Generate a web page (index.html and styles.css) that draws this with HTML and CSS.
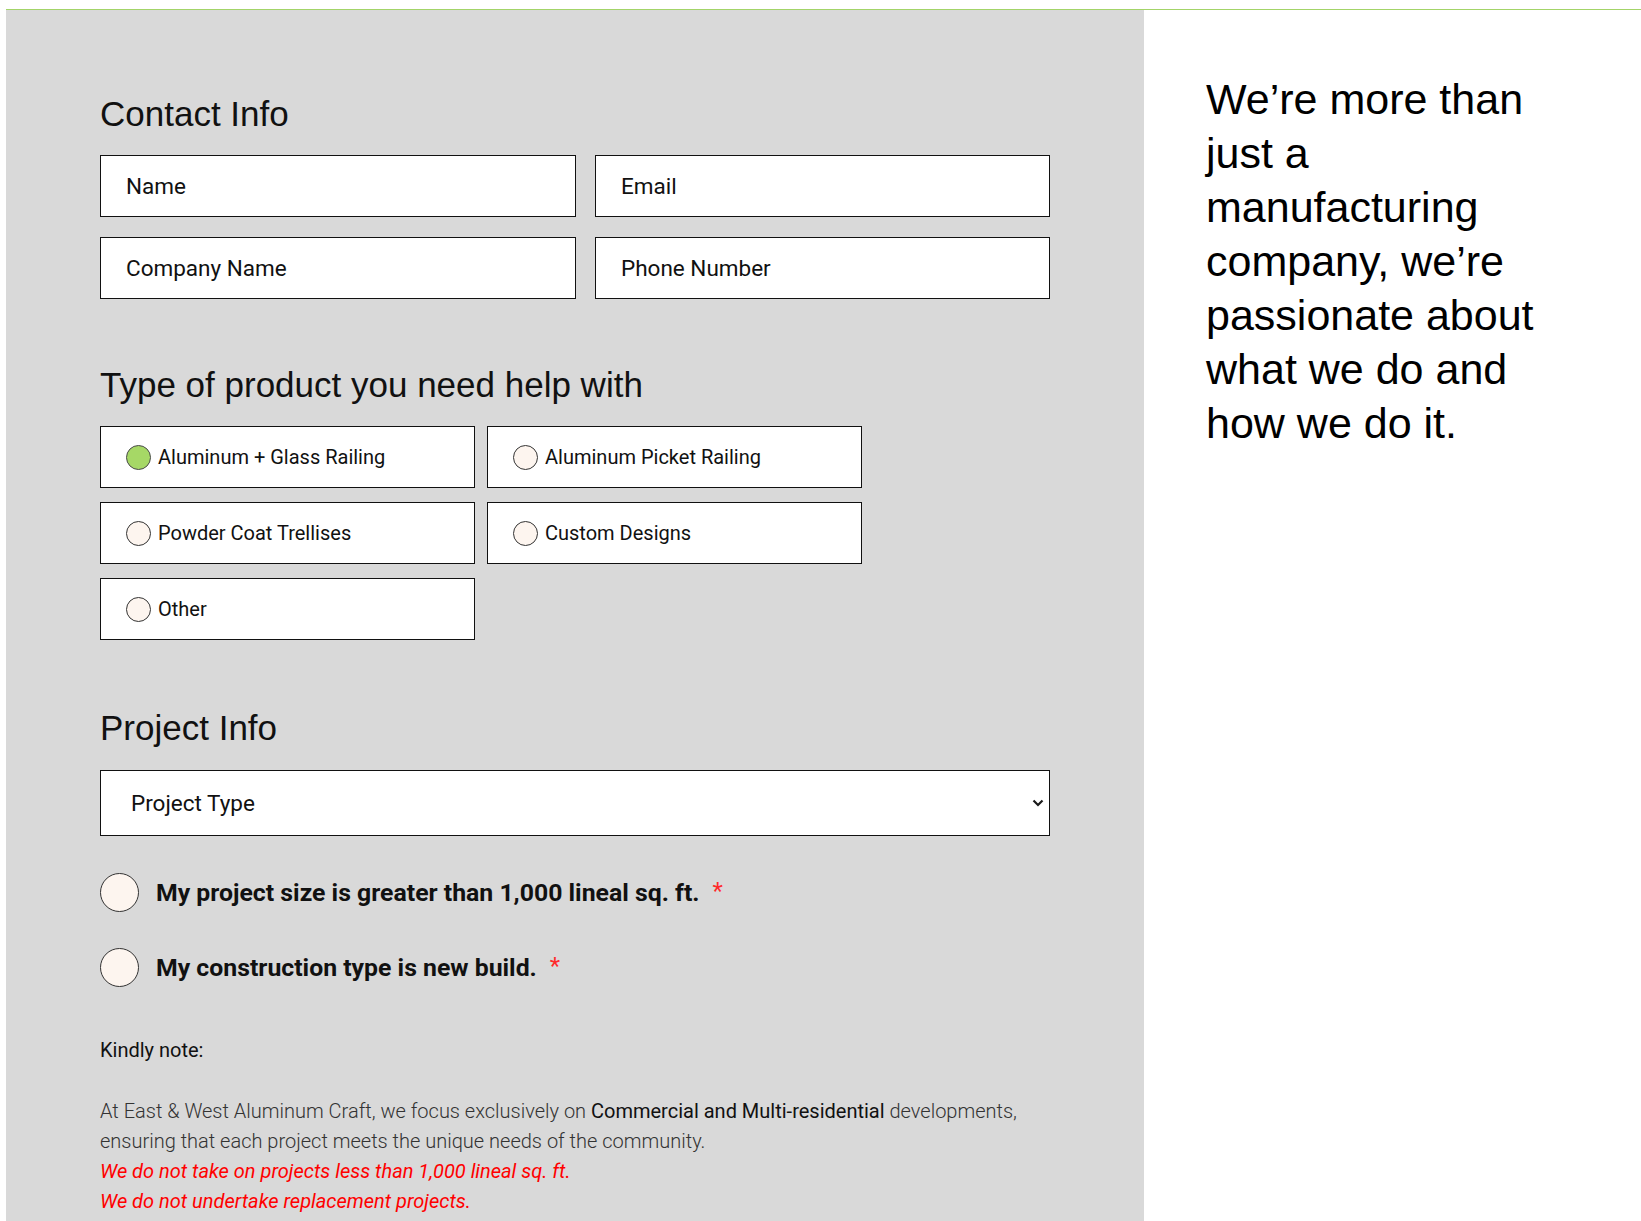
FILE: index.html
```html
<!DOCTYPE html>
<html lang="en">
<head>
<meta charset="utf-8">
<title>Contact</title>
<link rel="stylesheet" href="styles.css">
</head>
<body>
<div class="page">
  <form class="form-panel">
    <h2 class="section-title">Contact Info</h2>
    <div class="contact-grid">
      <input class="text-field" type="text" placeholder="Name">
      <input class="text-field" type="email" placeholder="Email">
      <input class="text-field" type="text" placeholder="Company Name">
      <input class="text-field" type="tel" placeholder="Phone Number">
    </div>

    <h2 class="section-title section-gap">Type of product you need help with</h2>
    <div class="option-grid">
      <label class="option"><span class="dot dot-checked"></span><span>Aluminum + Glass Railing</span></label>
      <label class="option"><span class="dot"></span><span>Aluminum Picket Railing</span></label>
      <label class="option"><span class="dot"></span><span>Powder Coat Trellises</span></label>
      <label class="option"><span class="dot"></span><span>Custom Designs</span></label>
      <label class="option"><span class="dot"></span><span>Other</span></label>
    </div>

    <h2 class="section-title section-gap-lg">Project Info</h2>
    <div class="select-wrap">
      <select class="select-field">
        <option>Project Type</option>
      </select>
      <svg class="select-arrow" width="12" height="8" viewBox="0 0 12 8" aria-hidden="true"><path d="M1.5 1.5 L6 6 L10.5 1.5" fill="none" stroke="#1a1a1a" stroke-width="2.2"/></svg>
    </div>

    <div class="confirm-list">
      <label class="confirm"><span class="big-dot"></span><span class="confirm-text">My project size is greater than 1,000 lineal sq. ft.</span><span class="req">*</span></label>
      <label class="confirm"><span class="big-dot"></span><span class="confirm-text">My construction type is new build.</span><span class="req">*</span></label>
    </div>

    <div class="note">
      <p class="note-title">Kindly note:</p>
      <p class="note-body">At East &amp; West Aluminum Craft, we focus exclusively on <strong>Commercial and Multi-residential</strong> developments, ensuring that each project meets the unique needs of the community.</p>
      <p class="warn">We do not take on projects less than 1,000 lineal sq. ft.</p>
      <p class="warn">We do not undertake replacement projects.</p>
    </div>
  </form>

  <aside class="side-panel">
    <p class="tagline">We’re more than just a manufacturing company, we’re passionate about what we do and how we do it.</p>
  </aside>
</div>
</body>
</html>
```

FILE: styles.css
```css
html, body {
  margin: 0;
  padding: 0;
  background: #ffffff;
}

body {
  font-family: "Liberation Sans", Arial, sans-serif;
  color: #111;
}

.page {
  margin: 9px 0 0 6px;
  border-top: 1px solid #a3d468;
  display: grid;
  grid-template-columns: 1138px 1fr;
  min-height: calc(100vh - 10px);
}

.form-panel {
  background: #d9d9d9;
  padding: 83px 94px 10px 94px;
}

.section-title {
  margin: 0 0 21px;
  font-family: "Liberation Sans", Arial, sans-serif;
  font-weight: 400;
  font-size: 35px;
  line-height: 42px;
  color: #111;
}

.section-gap {
  margin-top: 65px;
}

.section-gap-lg {
  margin-top: 67px;
}

.contact-grid {
  display: grid;
  grid-template-columns: 476px 455px;
  column-gap: 19px;
  row-gap: 20px;
  margin-top: -1px;
}

.text-field {
  box-sizing: border-box;
  height: 62px;
  width: 100%;
  margin: 0;
  padding: 0 25px;
  border: 1px solid #111;
  border-radius: 0;
  background: #fff;
  font-family: Roboto, "Liberation Sans", sans-serif;
  font-size: 22.5px;
  color: #111;
  outline: none;
}

.text-field::placeholder {
  color: #111;
  opacity: 1;
}

.option-grid {
  display: grid;
  grid-template-columns: 375px 375px;
  column-gap: 12px;
  row-gap: 14px;
  margin-top: -1px;
}

.option {
  box-sizing: border-box;
  height: 62px;
  display: flex;
  align-items: center;
  gap: 7px;
  padding-left: 25px;
  border: 1px solid #111;
  background: #fff;
  font-family: Roboto, "Liberation Sans", sans-serif;
  font-size: 20px;
  color: #111;
}

.dot {
  box-sizing: border-box;
  width: 25px;
  height: 25px;
  border-radius: 50%;
  border: 1px solid #333;
  background: #fdf5ef;
  flex: none;
}

.dot-checked {
  background: #a6d866;
  border-color: #4a4a4a;
}

.select-wrap {
  position: relative;
}

.select-field {
  -webkit-appearance: none;
  appearance: none;
  box-sizing: border-box;
  display: block;
  width: 100%;
  height: 66px;
  margin: 0;
  padding: 0 30px;
  border: 1px solid #111;
  border-radius: 0;
  background: #fff;
  font-family: Roboto, "Liberation Sans", sans-serif;
  font-size: 22.5px;
  color: #111;
  outline: none;
}

.select-arrow {
  position: absolute;
  right: 6px;
  top: 29px;
  pointer-events: none;
}

.confirm-list {
  margin-top: 37px;
  display: flex;
  flex-direction: column;
  gap: 36px;
}

.confirm {
  display: flex;
  align-items: center;
  font-family: Roboto, "Liberation Sans", sans-serif;
  font-weight: 700;
  font-size: 24.8px;
  color: #111;
}

.big-dot {
  box-sizing: border-box;
  width: 39px;
  height: 39px;
  border-radius: 50%;
  border: 1px solid #333;
  background: #fdf5ef;
  flex: none;
  margin-right: 17px;
}

.req {
  color: #ff2a2a;
  font-weight: 400;
  margin-left: 13px;
  align-self: flex-start;
  margin-top: 4px;
  font-size: 24px;
}

.note {
  margin-top: 48px;
  font-family: Roboto, "Liberation Sans", sans-serif;
  font-size: 20px;
  line-height: 30px;
}

.note p {
  margin: 0;
}

.note .note-title {
  margin-bottom: 31px;
  color: #111;
  font-weight: 400;
}

.note-body {
  color: #333;
  font-weight: 300;
}

.note-body strong {
  font-weight: 400;
  color: #111;
}

.warn {
  color: #ff0000;
  font-style: italic;
  font-weight: 400;
}

.side-panel {
  background: #fff;
  padding: 62px 0 0 62px;
}

.tagline {
  margin: 0;
  width: 370px;
  font-family: "Liberation Sans", Arial, sans-serif;
  font-size: 43px;
  line-height: 54px;
  color: #000;
}
```
